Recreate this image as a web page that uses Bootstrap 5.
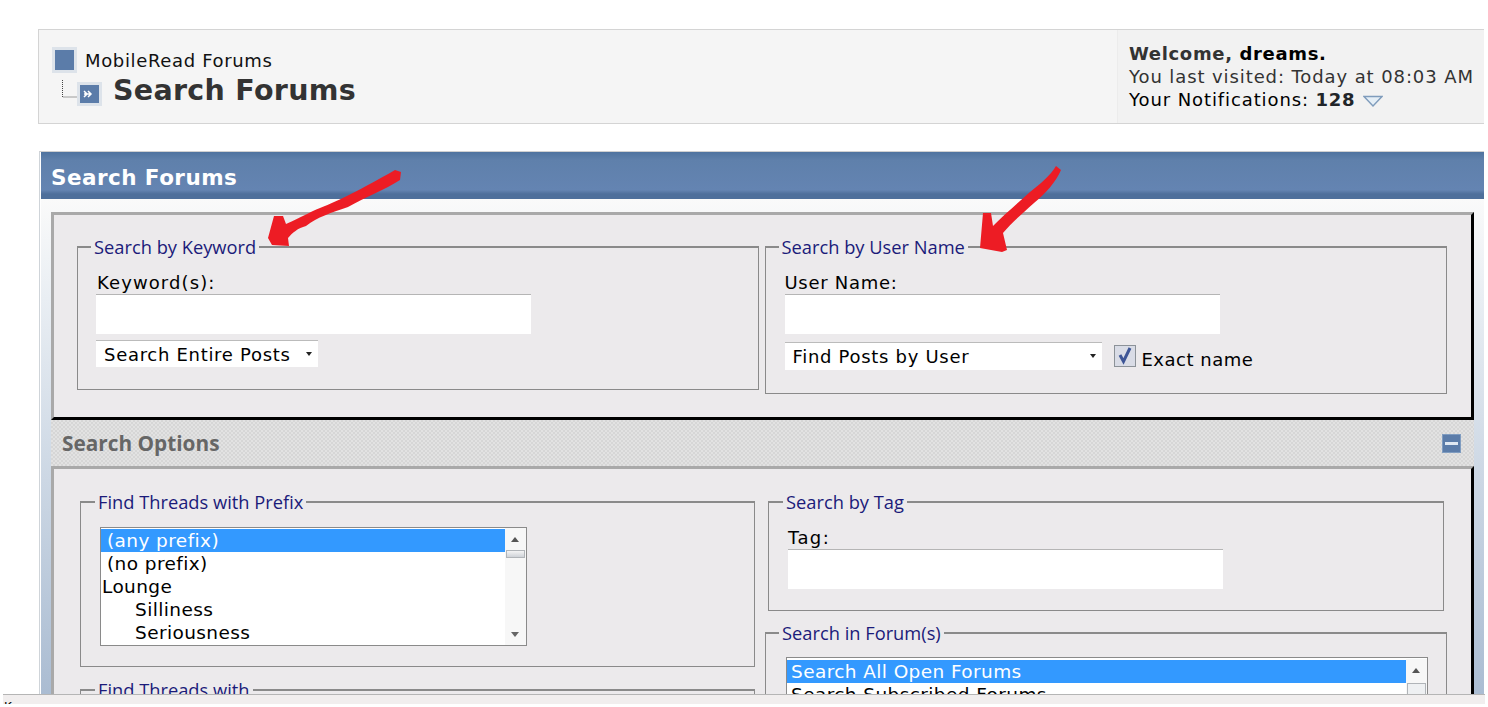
<!DOCTYPE html>
<html lang="en">
<head>
<meta charset="utf-8">
<title>Search Forums</title>
<link rel="stylesheet" href="https://cdn.jsdelivr.net/npm/bootstrap@5.3.0/dist/css/bootstrap.min.css">
<style>
html,body{height:707px;overflow:hidden;background:#fff}
body{font-family:"DejaVu Sans",sans-serif;font-size:18px;color:#000;line-height:23px;padding:29px 4px 0 38px}
.crumbbar{height:95px;background:#f5f5f5;border:1px solid #d4d4d4;border-right:0}
.crumbleft{padding:17px 0 0 13px}
.crumbtop{gap:8px;font-size:18px;letter-spacing:.65px;height:26px;color:#111}
.crumbico{width:25px;height:26px;background:#5b7ca9;border:3px solid #dde3ea;flex:none}
.crumbsub{margin-left:10px;height:34px}
.h-title{font-size:28.5px;font-weight:700;color:#333;line-height:34px;margin:1px 0 0 11px;letter-spacing:.3px}
.crumbright{width:367px;flex:none;border-left:1px solid #ececec;background:#f2f2f2;padding:12px 0 0 11px;color:#333;letter-spacing:.9px}
.crumbright b{font-weight:700;letter-spacing:.65px}
.notif-tri{margin-left:1px}
.mainwrap{margin-top:27px;border-top:1px solid #d0d0d0;border-left:1px solid #cfd4d9;margin-left:1px}
.titlebar{height:47px;margin-left:1px;background:linear-gradient(#4f739f 0,#5f80ab 8px,#6484b2 38px,#4e6f9b 42px,#4e6f9b 47px);color:#fff;font-weight:700;font-size:21.5px;letter-spacing:.45px;padding-left:10px;line-height:52px}
.bodywrap{height:505px;overflow:hidden;margin-left:1px;background:linear-gradient(#fafafa,#e9eef3 100px,#b9c8da 400px,#a9bbd1)}
.bodyfill{margin:0 10px;padding-top:13px;background:#f5f5f5 content-box}
.panelmain{height:208px;background:#eceaec;border-top:3px solid #a9a9a9;border-left:3px solid #a9a9a9;border-right:3px solid #000;border-bottom:3px solid #000;padding:20px 24px 0 23px;gap:6px}
.panelopts{background:#eceaec;border-top:3px solid #a9a9a9;border-left:3px solid #a9a9a9;border-right:3px solid #000;height:300px;padding:21px 24px 0 26px;gap:10px}
.optbar{height:46px;background-color:#dcdcdc;background-image:repeating-conic-gradient(#d6d6d6 0 25%,#e2e2e2 0 50%);background-size:4px 4px;font-family:"Open Sans",sans-serif;font-weight:700;font-size:20.8px;color:#666;padding:0 13px 0 11px}
.minusbtn{width:19px;height:19px;background:#5b7ca9;border:1px solid #7f9cc0}
.minusbtn i{display:block;width:13px;height:3px;background:#dfe8f2}
fieldset.grp{border:1px solid #8a8a8a;border-top-width:2px;padding:11px 18px 0 18px;margin:0;min-width:0}
fieldset.half{flex:1 1 0}
fieldset.grp legend{float:none;width:auto;margin:0 0 0 -5px;padding:0 3px;font-family:"Open Sans",sans-serif;font-size:18.3px;line-height:24px;color:#1b1b7a}
fieldset.fs-a{height:155px}
fieldset.fs-b{height:159px;padding-left:19px}
fieldset.fs-b legend{margin-left:-6px}
.fldlabel{line-height:26px;height:24px;letter-spacing:.7px}
.lbl-k{letter-spacing:1.1px;padding-left:1px}
.lbl-t{letter-spacing:1.4px}
.txtbox{display:block;width:435px;height:40px;background:#fff;border:0;border-top:1px solid #b5b5b5;border-radius:0;padding:0}
.selbox{border:0;border-top:1px solid #bbb;border-radius:0;background:#fff;font-size:18px;letter-spacing:.7px;color:#000;padding:0 0 0 8px;appearance:none;display:block}
.sel-a{width:222px;height:27px}
.sel-b{width:317px;height:28px}
.selwrap{position:relative}
.selwrap::after{content:"";position:absolute;right:6px;top:12px;border:3.5px solid transparent;border-top:4px solid #222;border-bottom:0}
.selrow-a{margin-top:6px;display:inline-block}
.selrow-b{margin-top:8px;height:28px}
.exactlbl{letter-spacing:.5px;margin:6px 0 0 6px}
.chk{margin:3px 0 0 12px;flex:none}
.lbox{background:#fff;border:1px solid #8a8a8a;font-size:18.5px;letter-spacing:.4px}
.lb-a{height:119px;padding-top:1px}
.lb-b{height:60px;padding-top:2px}
.lbitem{height:23px;line-height:23px;white-space:nowrap;padding-left:1px}
.lbitem.sel{background:#3399ff;color:#fff;padding-left:6px}
.lbitem.opt{padding-left:6px}
.lb-b .lbitem.sel,.lb-b .lbitem.opt{padding-left:4px}
.lbitem.sub{padding-left:34px}
.lbbar{width:21px;flex:none;background:#f7f7f7;position:relative;margin-top:-1px}
.lbup,.lbdn{position:absolute;left:6px;border:4px solid transparent}
.lbup{top:9px;border-bottom:5px solid #555;border-top:0}
.lbdn{bottom:8px;border-top:5px solid #666;border-bottom:0}
.lbthumb{position:absolute;left:1px;right:1px;top:22px;height:8px;background:linear-gradient(#f4f4f4,#cfd3d8);border:1px solid #b0b4b8}
.lb-b .lbthumb{top:24px;height:30px;background:repeating-linear-gradient(#8c9096 0 1px,transparent 1px 3px) center/9px 9px no-repeat,#eef0f2}
.col-l{width:675px;flex:none}
.col-r{width:682px;flex:none}
fieldset.gl1{height:177px;padding:13px 227px 0 19px}
fieldset.gl2{margin-top:11px;height:60px}
fieldset.gl2 legend{margin-left:-4px}
fieldset.gr1{margin:0 3px;height:121px;padding-left:19px}
fieldset.gr1 legend{margin-left:-5px}
fieldset.gr2{margin-top:10px;height:120px;padding:12px 18px 0 20px}
fieldset.gr2 legend{margin-left:-7px}
.arrowlay{position:absolute;left:0;top:0;pointer-events:none}
.statusbar{position:fixed;left:3px;top:694px;right:3px;height:10px;overflow:hidden;background:#f1eeee;border-top:1px solid #b5b5b5;font-size:12px;line-height:16px;padding:4px 0 0 1px}
</style>
</head>
<body>
<div class="crumbbar d-flex">
  <div class="crumbleft flex-grow-1">
    <div class="crumbtop d-flex align-items-center">
      <span class="crumbico"></span><span>MobileRead Forums</span>
    </div>
    <div class="crumbsub d-flex">
      <svg width="40" height="34" viewBox="0 0 40 34" aria-hidden="true">
        <path d="M.5 7V24H15" fill="none" stroke="#444" stroke-dasharray="1 1"/>
        <rect x="15" y="9" width="25" height="24" fill="#dde3ea"/>
        <rect x="18" y="12" width="19" height="18" fill="#5b7ca9"/>
        <path d="M22 18l3 3-3 3M26 18l3 3-3 3M22 21h6" fill="none" stroke="#fff" stroke-width="1.5"/>
      </svg>
      <h1 class="h-title">Search Forums</h1>
    </div>
  </div>
  <div class="crumbright">
    <div><b>Welcome, <span class="text-black">dreams.</span></b></div>
    <div>You last visited: Today at 08:03 AM</div>
    <div class="text-black">Your Notifications: <b class="text-body">128</b>
      <svg class="notif-tri" width="20" height="12" viewBox="0 0 20 12" aria-hidden="true"><path d="M1 1.5h18L10 11z" fill="#e4eef6" stroke="#7f9cbc" stroke-width="1.4"/></svg>
    </div>
  </div>
</div>

<div class="mainwrap">
  <div class="titlebar">Search Forums</div>
  <div class="bodywrap">
    <div class="bodyfill">
      <div class="panelmain d-flex align-items-start">
        <fieldset class="grp half fs-a">
          <legend>Search by Keyword</legend>
          <div class="fldlabel lbl-k">Keyword(s):</div>
          <input class="txtbox" type="text" aria-label="Keyword">
          <div class="selwrap selrow-a"><select class="selbox sel-a" aria-label="Search in"><option>Search Entire Posts</option></select></div>
        </fieldset>
        <fieldset class="grp half fs-b">
          <legend>Search by User Name</legend>
          <div class="fldlabel">User Name:</div>
          <input class="txtbox" type="text" aria-label="User name">
          <div class="d-flex selrow-b">
            <div class="selwrap"><select class="selbox sel-b" aria-label="Find by"><option>Find Posts by User</option></select></div>
            <svg class="chk" width="22" height="22" viewBox="0 0 22 22" aria-hidden="true"><rect x=".5" y=".5" width="21" height="21" fill="#d9dce6" stroke="#8c9298"/><path d="M6 10l3.5 6.5L16 3" fill="none" stroke="#3d5596" stroke-width="3"/></svg>
            <span class="exactlbl">Exact name</span>
          </div>
        </fieldset>
      </div>
      <div class="optbar d-flex align-items-center justify-content-between">
        <span>Search Options</span>
        <span class="minusbtn d-flex align-items-center justify-content-center"><i></i></span>
      </div>
      <div class="panelopts d-flex align-items-start">
        <div class="d-flex flex-column col-l">
          <fieldset class="grp gl1">
            <legend>Find Threads with Prefix</legend>
            <div class="lbox d-flex lb-a">
              <div class="flex-grow-1">
                <div class="lbitem sel">(any prefix)</div>
                <div class="lbitem opt">(no prefix)</div>
                <div class="lbitem">Lounge</div>
                <div class="lbitem sub">Silliness</div>
                <div class="lbitem sub">Seriousness</div>
              </div>
              <div class="lbbar"><span class="lbup"></span><span class="lbthumb"></span><span class="lbdn"></span></div>
            </div>
          </fieldset>
          <fieldset class="grp gl2">
            <legend>Find Threads with</legend>
          </fieldset>
        </div>
        <div class="d-flex flex-column col-r">
          <fieldset class="grp gr1">
            <legend>Search by Tag</legend>
            <div class="fldlabel lbl-t">Tag:</div>
            <input class="txtbox" type="text" aria-label="Tag">
          </fieldset>
          <fieldset class="grp gr2">
            <legend>Search in Forum(s)</legend>
            <div class="lbox d-flex lb-b">
              <div class="flex-grow-1">
                <div class="lbitem sel">Search All Open Forums</div>
                <div class="lbitem opt">Search Subscribed Forums</div>
              </div>
              <div class="lbbar"><span class="lbup"></span><span class="lbthumb"></span></div>
            </div>
          </fieldset>
        </div>
      </div>
    </div>
  </div>
</div>

<svg class="arrowlay" width="1488" height="707" viewBox="0 0 1488 707" aria-hidden="true">
  <path fill="#ed1c24" d="M395 170 L401 172 L400 180 C385 190 365 197 348 207 C330 213 318 217 306 226 C298 228 292 233 288 238 L289 246 L272 245 L268 238 L274 216 L283 216 L286 224 C300 218 310 212 320 208 C340 200 360 190 395 170Z"/>
  <path fill="#ed1c24" d="M1056 166 L1061 170 C1056 182 1045 194 1034 203 C1022 214 1012 222 1003 233 L1007 250 L1002 252 L980 248 L983 213 L991 213 L993 226 C1005 214 1018 203 1030 192 C1040 184 1050 176 1056 166Z"/>
</svg>
<div class="statusbar">K</div>
</body>
</html>
